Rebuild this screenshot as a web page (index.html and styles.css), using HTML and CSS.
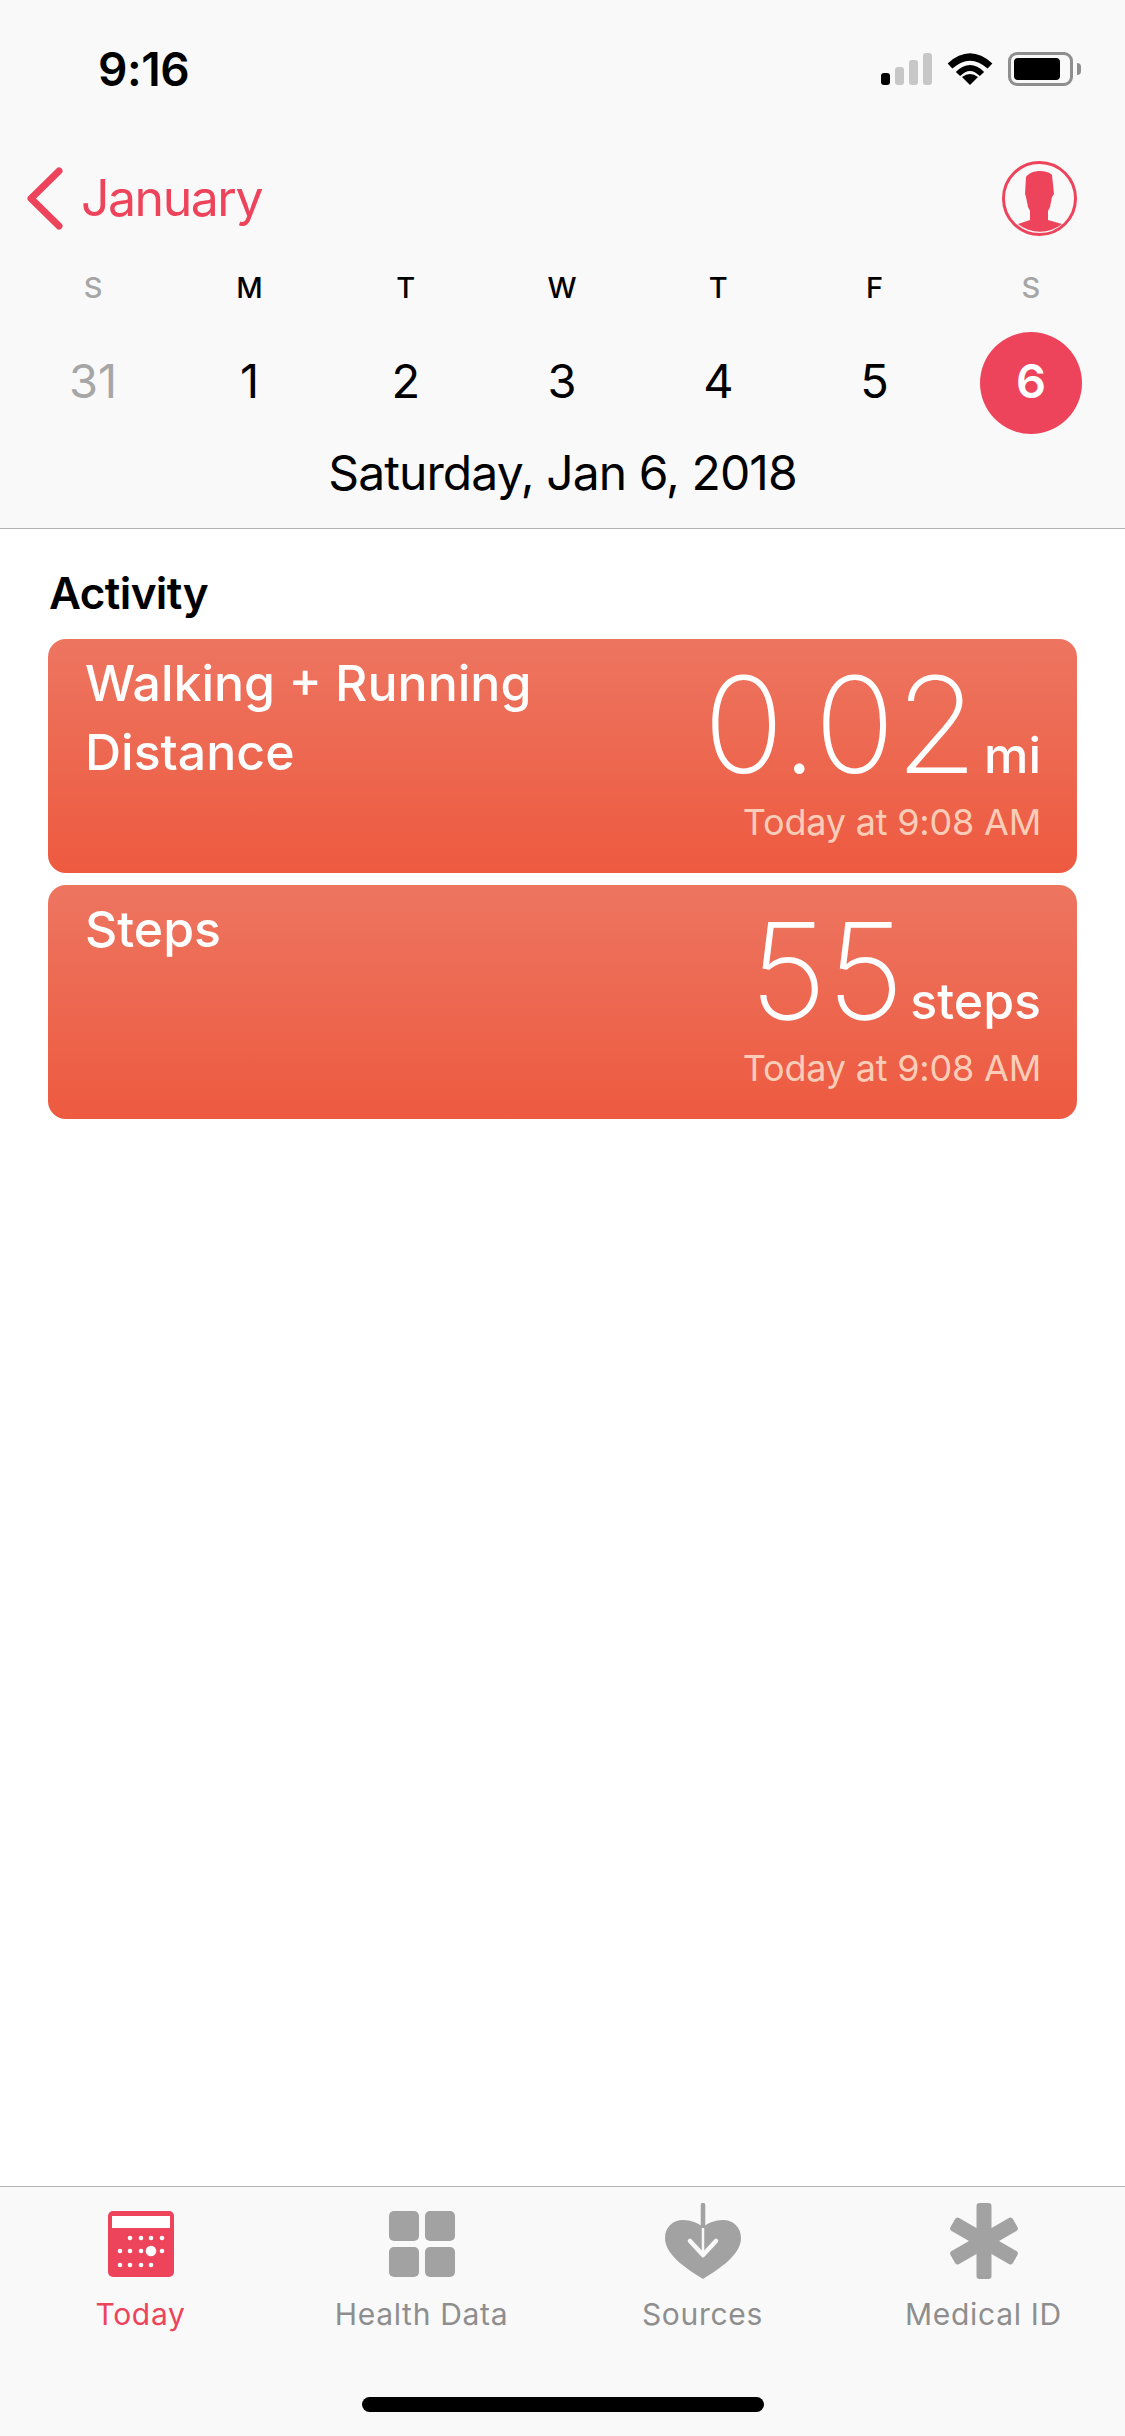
FILE: index.html
```html
<!DOCTYPE html>
<html lang="en">
<head>
  <meta charset="UTF-8">
  <title>Health</title>
  <meta name="viewport" content="width=device-width, initial-scale=1.0">
  <link rel="stylesheet" href="styles.css">
</head>
<body>
  <div class="app">
    <header class="top">
      <div class="status">
        <span class="clock">9:16</span>
        <div class="status-icons">
          <div class="signal">
            <i class="bar bar-1 on"></i>
            <i class="bar bar-2"></i>
            <i class="bar bar-3"></i>
            <i class="bar bar-4"></i>
          </div>
          <svg class="wifi" width="46" height="33" viewBox="0 0 46 33">
            <path d="M3 14Q23 -4 43 14" fill="none" stroke="#000" stroke-width="7"/>
            <path d="M11 22Q23 10 35 22" fill="none" stroke="#000" stroke-width="6"/>
            <path d="M23 33L15 25Q23 19 31 25Z" fill="#000"/>
          </svg>
          <div class="battery"><div class="battery-fill"></div></div>
          <div class="battery-tip"></div>
        </div>
      </div>

      <div class="nav-row">
        <div class="back">
          <svg width="36" height="63" viewBox="0 0 36 63">
            <path d="M32 4L4 31.5L32 59" fill="none" stroke="#ed445c" stroke-width="7" stroke-linecap="round" stroke-linejoin="round"/>
          </svg>
          <span class="month">January</span>
        </div>
        <svg class="profile" width="75" height="75" viewBox="0 0 75 75">
          <circle cx="37.5" cy="37.5" r="36" fill="none" stroke="#ed445c" stroke-width="3"/>
          <path d="M38 10C43 10 47 11 50 14L52 33L50 36L48 46L46 50V59L60 63A35 35 0 0 1 16 63L28 59V50L26 46L24 36L23 33L24 16C27 12 32 10 38 10Z" fill="#ed445c"/>
        </svg>
      </div>

      <div class="week">
        <span class="off">S</span><span>M</span><span>T</span><span>W</span><span>T</span><span>F</span><span class="off">S</span>
      </div>
      <div class="days">
        <span class="day off">31</span>
        <span class="day">1</span>
        <span class="day">2</span>
        <span class="day">3</span>
        <span class="day">4</span>
        <span class="day">5</span>
        <span class="day selected">6</span>
      </div>
      <div class="full-date">Saturday, Jan 6, 2018</div>
    </header>

    <main class="content">
      <h2>Activity</h2>
      <div class="card">
        <div class="card-title">Walking + Running<br>Distance</div>
        <div class="card-data">
          <div class="value">0.02<span class="unit">mi</span></div>
          <div class="when">Today at 9:08 AM</div>
        </div>
      </div>
      <div class="card">
        <div class="card-title">Steps</div>
        <div class="card-data">
          <div class="value">55<span class="unit">steps</span></div>
          <div class="when">Today at 9:08 AM</div>
        </div>
      </div>
    </main>

    <footer class="tabs">
      <div class="tab-row">
        <div class="tab active">
          <svg width="66" height="66" viewBox="0 0 66 66">
            <rect width="66" height="66" rx="5" fill="#ed445c"/>
            <rect x="4" y="5" width="58" height="12" fill="#fff"/>
            <g fill="#fff">
              <circle cx="22" cy="27" r="2.3"/><circle cx="33" cy="27" r="2.3"/><circle cx="43" cy="27" r="2.3"/><circle cx="54" cy="27" r="2.3"/>
              <circle cx="12" cy="40" r="2.3"/><circle cx="22" cy="40" r="2.3"/><circle cx="33" cy="40" r="2.3"/><circle cx="43" cy="40" r="5.3"/><circle cx="54" cy="40" r="2.3"/>
              <circle cx="12" cy="54" r="2.3"/><circle cx="22" cy="54" r="2.3"/><circle cx="33" cy="54" r="2.3"/><circle cx="43" cy="54" r="2.3"/>
            </g>
          </svg>
          <span>Today</span>
        </div>
        <div class="tab">
          <svg width="66" height="66" viewBox="0 0 66 66" fill="#a2a2a2">
            <rect width="30" height="30" rx="5"/><rect x="36" width="30" height="30" rx="5"/>
            <rect y="36" width="30" height="30" rx="5"/><rect x="36" y="36" width="30" height="30" rx="5"/>
          </svg>
          <span>Health Data</span>
        </div>
        <div class="tab">
          <svg class="tall" width="76" height="76" viewBox="0 0 76 76">
            <path d="M38 76C22 66 0 52 0 35C0 24 8 17 18 17C26 17 33 20 38 24C43 20 50 17 58 17C68 17 76 24 76 35C76 52 54 66 38 76Z" fill="#a2a2a2"/>
            <path d="M38 2V24" stroke="#a2a2a2" stroke-width="4.5" stroke-linecap="round"/>
            <path d="M38 25V51" stroke="#f9f9f9" stroke-width="2.5"/>
            <path d="M25 38L38 52L51 38" fill="none" stroke="#f9f9f9" stroke-width="4.5" stroke-linecap="round" stroke-linejoin="round"/>
          </svg>
          <span>Sources</span>
        </div>
        <div class="tab">
          <svg class="tall" width="76" height="76" viewBox="0 0 76 76" fill="#a2a2a2">
            <rect x="30.5" width="15" height="76" rx="3"/>
            <rect x="30.5" y="2" width="15" height="72" rx="3" transform="rotate(60 38 38)"/>
            <rect x="30.5" y="2" width="15" height="72" rx="3" transform="rotate(-60 38 38)"/>
          </svg>
          <span>Medical ID</span>
        </div>
      </div>
      <div class="home-bar"></div>
    </footer>
  </div>
</body>
</html>
```

FILE: styles.css
```css
* { margin: 0; padding: 0; box-sizing: border-box; }
body { font-family: Inter, 'Liberation Sans', sans-serif; background: #fff; color: #000; }
.app {
  display: flex;
  flex-direction: column;
  width: 1125px;
  height: 2436px;
  overflow: hidden;
}

/* Top area */
.top {
  height: 529px;
  background: #f9f9f9;
  border-bottom: 1px solid #b2b2b2;
}
.status {
  display: flex;
  justify-content: space-between;
  height: 161px;
  padding: 52px 44px 0 98px;
}
.clock { font-size: 46px; font-weight: 600; line-height: 34px; letter-spacing: -0.4px; }
.status-icons { display: flex; align-items: flex-start; height: 34px; }
.signal { display: flex; align-items: flex-end; gap: 5px; height: 33px; margin-right: 15px; }
.bar { display: block; width: 9px; border-radius: 3px; background: #c7c7c7; }
.bar.on { background: #000; }
.bar-1 { height: 12px; }
.bar-2 { height: 18px; }
.bar-3 { height: 25px; }
.bar-4 { height: 32px; }
.wifi { margin-right: 15px; }
.battery {
  width: 65px;
  height: 34px;
  padding: 3px;
  border: 3px solid #8e8e8e;
  border-radius: 9px;
}
.battery-fill { width: 46px; height: 22px; background: #000; border-radius: 4px; }
.battery-tip {
  width: 4px;
  height: 12px;
  margin: 11px 0 0 4px;
  background: #8e8e8e;
  border-radius: 0 4px 4px 0;
}

.nav-row {
  display: flex;
  justify-content: space-between;
  height: 75px;
  padding: 0 48px 0 27px;
}
.back { display: flex; align-items: center; gap: 18px; color: #ed445c; }
.month { font-size: 50px; line-height: 75px; letter-spacing: -1.5px; }

.week, .days {
  display: grid;
  grid-template-columns: repeat(7, 156.3px);
  padding-left: 15px;
  text-align: center;
}
.week {
  height: 40px;
  margin-top: 32px;
  font-size: 29px;
  font-weight: 500;
  line-height: 40px;
}
.days { height: 102px; margin-top: 24px; }
.day { font-size: 47px; line-height: 98px; }
.off { color: #a6a6a6; }
.selected {
  justify-self: center;
  width: 102px;
  height: 102px;
  background: #ed445c;
  border-radius: 50%;
  color: #fff;
  font-weight: 600;
}
.full-date {
  margin-top: 9px;
  font-size: 48px;
  line-height: 60px;
  text-align: center;
  letter-spacing: -0.9px;
}

/* Activity list */
.content { flex: 1; padding: 39px 48px 0; }
h2 {
  margin: 0 0 21px 1px;
  font-size: 44px;
  font-weight: 600;
  line-height: 50px;
  letter-spacing: -0.6px;
}
.card {
  display: flex;
  justify-content: space-between;
  height: 234px;
  margin-bottom: 12px;
  padding: 0 36px 0 37px;
  background: linear-gradient(#ed7560, #ed5a40);
  border-radius: 18px;
  color: #fff;
}
.card-title {
  padding-top: 10px;
  font-size: 50px;
  font-weight: 500;
  line-height: 69px;
}
.card-data { text-align: right; }
.value {
  height: 150px;
  font-size: 134px;
  font-weight: 250;
  line-height: 170px;
}
.unit {
  margin-left: 6px;
  font-size: 50px;
  font-weight: 500;
}
.when {
  margin-top: 11px;
  font-size: 36px;
  line-height: 44px;
  letter-spacing: -0.2px;
  color: #fbcdb8;
}

/* Tab bar */
.tabs {
  height: 250px;
  background: #f9f9f9;
  border-top: 1px solid #b2b2b2;
}
.tab-row {
  display: grid;
  grid-template-columns: repeat(4, 281px);
  height: 210px;
}
.tab {
  display: flex;
  flex-direction: column;
  align-items: center;
  padding-top: 24px;
  color: #8e8e8e;
  font-size: 30px;
  line-height: 40px;
  letter-spacing: 0.7px;
}
.tab svg { margin-bottom: 17px; }
.tab svg.tall { margin: -8px 0 15px; }
.tab.active { color: #ed445c; }
.home-bar {
  width: 402px;
  height: 15px;
  margin: 0 auto;
  background: #000;
  border-radius: 8px;
}
```
